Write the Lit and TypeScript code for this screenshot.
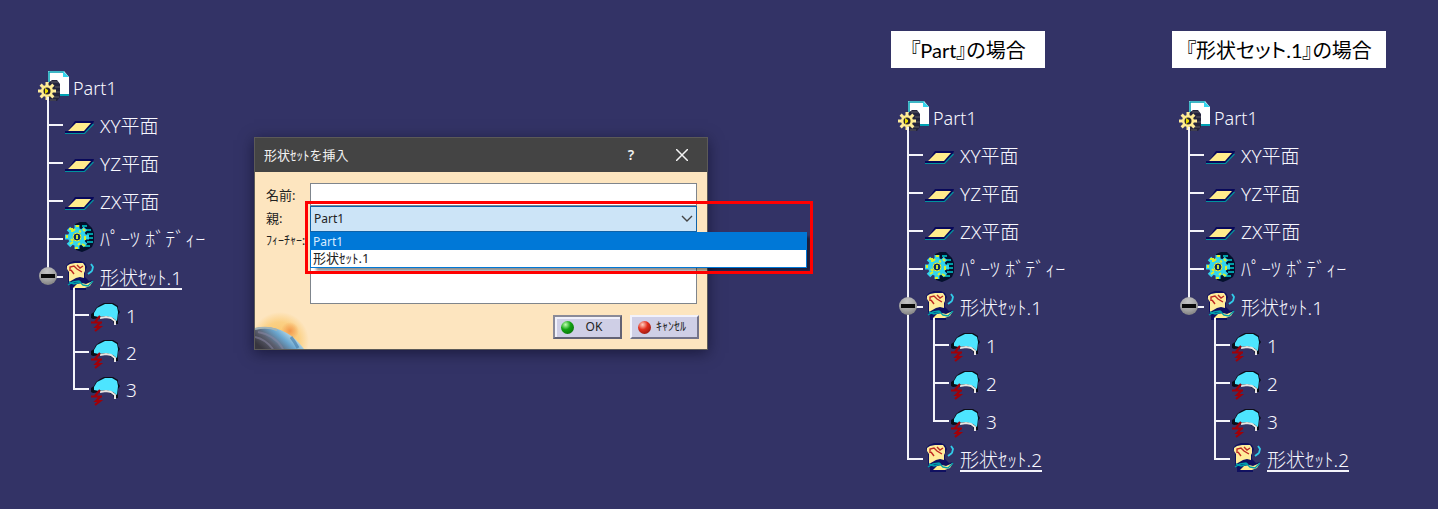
import { LitElement, html, css, svg, nothing } from "lit";
import { customElement, property, state } from "lit/decorators.js";
import { classMap } from "lit/directives/class-map.js";

type IconName = "part" | "plane" | "body" | "set" | "surface";

interface TreeItem {
  label: string;
  icon: IconName;
  current?: boolean;
  children?: TreeItem[];
}

const planes: TreeItem[] = [
  { label: "XY平面", icon: "plane" },
  { label: "YZ平面", icon: "plane" },
  { label: "ZX平面", icon: "plane" },
  { label: "ﾊﾟｰﾂ ﾎﾞﾃﾞｨｰ", icon: "body" },
];
const surfaces: TreeItem[] = ["1", "2", "3"].map((label) => ({ label, icon: "surface" }));
const set2: TreeItem = { label: "形状ｾｯﾄ.2", icon: "set", current: true };

const before: TreeItem = {
  label: "Part1",
  icon: "part",
  children: [...planes, { label: "形状ｾｯﾄ.1", icon: "set", current: true, children: surfaces }],
};
const underPart: TreeItem = {
  label: "Part1",
  icon: "part",
  children: [...planes, { label: "形状ｾｯﾄ.1", icon: "set", children: surfaces }, set2],
};
const underSet: TreeItem = {
  label: "Part1",
  icon: "part",
  children: [...planes, { label: "形状ｾｯﾄ.1", icon: "set", children: [...surfaces, set2] }],
};

const teeth = (cx: number, cy: number, r: number, w: number, fill: string) =>
  [0, 45, 90, 135].map(
    (a) => svg`<rect x=${cx - w / 2} y=${cy - r} width=${w} height=${r * 2} fill=${fill} transform="rotate(${a} ${cx} ${cy})"/>`
  );

const icons = {
  part: () => svg`
    <path d="M10 3H26L31 9V28H10Z" fill="#fff"/>
    <path d="M11 14V4H26" fill="none" stroke="#00a0b4" stroke-width="1.5"/>
    <path d="M25 3L31 9H25Z" fill="#33d6ee"/>
    <path d="M20 27H31" stroke="#00a0b4" stroke-width="2"/>
    <path d="M10 15L14 12H19L22 16V29L19 33H11Z" fill="#24243c"/>
    <path d="M13 14H20M17 19H22M17 24H22M14 29H21M12 32H18" stroke="#5d5a62"/>
    ${teeth(9, 23, 9, 3, "#ffec9a")}
    <circle cx="9" cy="23" r="6" fill="#ffec8c"/>
    <circle cx="9" cy="23" r="3.5" fill="#26222c"/>
    <path d="M7 20L10 22V24L7 26Z" fill="#e8dc00"/>`,
  plane: () => svg`
    <path d="M10 15H29L28 18L19 28H0V25H3Z" fill="#08085a"/>
    <path d="M11 17H26L19 25H3Z" fill="#ffec8c"/>
    <path d="M0 27.500H19.500L28.500 18" fill="none" stroke="#00929e" stroke-width="1.2"/>`,
  body: () => svg`
    <path d="M10 4L15 2H21L24 5L27 8L29 13V22L27 27L22 30L17 32L11 30Z" fill="#04102c"/>
    <path d="M17 6H22M21 10H26M22 14H28M23 18H28M22 22H28M20 26H25" stroke="#00a0a8" stroke-width="2"/>
    ${teeth(12, 17, 12, 5, "#32d5ee")}
    <circle cx="12" cy="17" r="9" fill="#32d5ee"/>
    <path d="M11 6H14M4 9H7V12M18 9L20 11M2 15V18M20 16V20M5 24L8 22M10 28H13M17 24L20 26M8 11L10 9M14 11L16 12M6 19L8 21M15 23L13 25" fill="none" stroke="#ddf02c" stroke-width="2"/>
    <circle cx="12" cy="17" r="4" fill="#072864" stroke="#f0ed28" stroke-width="1"/>
    <path d="M12 15V19" stroke="#cae635" stroke-width="2"/>`,
  set: () => svg`
    <path d="M1 8L4 5L9 3H16L20 5L22 9L20 14V19L24 23L28 22L25 28L21 30V32H5V28L3 24V13Z" fill="#101060"/>
    <path d="M2 8L5 6L10 5L18 5L20 8V13L19 15V20L15 19L11 20L4 24V14L2 11Z" fill="#ffec9a"/>
    <path d="M8 30L12 26L17 25L21 26L28 23L25 28L20 30Z" fill="#ffec8c"/>
    <path d="M5 13L5 9L9 8L12 11L17 14M12 7L15 10L18 8M6 12L9 16" fill="none" stroke="#be2824" stroke-width="1.400"/>
    <path d="M3 27L8 24L14 23L18 27L23 28L28 23M4 24L9 26L16 24" fill="none" stroke="#009eac" stroke-width="1.400"/>
    <path d="M23 16L27 13M27 13L28 9L26 6" fill="none" stroke="#31cce9" stroke-width="1.800"/>`,
  surface: () => svg`
    <path d="M0 18L3 16L5 12L9 9L13 7H22L27 10V13L29 16L27 19V28H23L22 25L17 22H10L2 23L0 22Z" fill="#0a0e18"/>
    <path d="M3 20V17L6 12L10 10L14 8L21 8L26 11L27 16L26 25L22 22L15 20L8 21Z" fill="#4de5ff"/>
    <path d="M9 22L15 21L20 22L24 25V29" fill="none" stroke="#e9e5e2" stroke-width="2"/>
    <path d="M9 20L4 26M0 26.500H11M9 27L5 31H9L4 35" fill="none" stroke="#a00008" stroke-width="2.200"/>`,
};

@customElement("feature-tree")
export class FeatureTree extends LitElement {
  @property({ attribute: false }) root!: TreeItem;
  @property({ type: Boolean, reflect: true }) compact = false;
  @state() private open = true;

  static styles = css`
    :host {
      display: block;
      --row: 38px;
      color: #f8f8ff;
      font: 300 19px/22px "Noto Sans", "Noto Sans CJK JP", sans-serif;
    }
    :host([compact]) {
      --child-row: 37px;
    }
    ul {
      list-style: none;
      margin: 0;
      padding: 0;
    }
    .branches {
      padding-left: 9px;
    }
    .branches .branches {
      --row: var(--child-row, 38px);
      padding-left: 8px;
    }
    .node {
      display: grid;
      grid-template-columns: 18px 1fr;
      position: relative;
    }
    .rail {
      background:
        linear-gradient(#f4f4fa, #f4f4fa) 0 0 / 2px 100% no-repeat,
        linear-gradient(#f4f4fa, #f4f4fa) 0 18px / 16px 2px no-repeat;
    }
    .last > .rail {
      background-size: 2px 20px, 16px 2px;
    }
    .row {
      display: flex;
      align-items: center;
      height: var(--row);
      gap: 5px;
      white-space: nowrap;
    }
    .icon {
      width: 30px;
      height: 38px;
      flex: none;
      overflow: visible;
    }
    .label {
      margin-top: 4px;
      border-bottom: 2px solid transparent;
      line-height: 20px;
    }
    .title {
      font-size: 18px;
    }
    .kana {
      font-size: 20px;
    }
    .current {
      border-color: #f4f4fb;
    }
    .toggle {
      position: absolute;
      left: -8px;
      top: 9px;
      width: 18px;
      height: 18px;
      padding: 0;
      border: 0;
      border-radius: 50%;
      background: radial-gradient(circle at 45% 25%, #c4c4c4, #a0a0a0 55%, #6c6c6c);
    }
    .dash {
      display: block;
      height: 4px;
      margin: 0 2px;
      background: #0a0a0a;
    }
  `;

  private row(item: TreeItem) {
    const trunk = item.children && this.open;
    return html`<div class="row">
      <svg class="icon" viewBox="0 0 30 38" aria-hidden="true">
        ${icons[item.icon]()}
        ${trunk
          ? item.icon === "part"
            ? svg`<rect x="9" y="29" width="2" height="9" fill="#f4f4fa"/>`
            : svg`<rect x="8" y="30" width="2" height="8" fill="#f4f4fa"/>`
          : nothing}
      </svg>
      <span class=${classMap({
        label: true,
        title: item.icon === "part",
        kana: item.icon === "body",
        current: !!item.current,
      })}>${item.label}</span>
    </div>`;
  }

  private branches(items: TreeItem[]): unknown {
    return html`<ul class="branches">
      ${items.map(
        (item, i) => html`<li class=${classMap({ node: true, last: i === items.length - 1 })}>
          <span class="rail"></span>
          <div>
            ${this.row(item)}
            ${item.children && this.open ? this.branches(item.children) : nothing}
          </div>
          ${item.children
            ? html`<button class="toggle" aria-label=${item.label} aria-expanded=${this.open}
                @click=${() => (this.open = !this.open)}><span class="dash"></span></button>`
            : nothing}
        </li>`
      )}
    </ul>`;
  }

  render() {
    return html`${this.row(this.root)}${this.branches(this.root.children ?? [])}`;
  }
}

@customElement("insert-dialog")
export class InsertDialog extends LitElement {
  @state() private parent = 0;
  private options = ["Part1", "形状ｾｯﾄ.1"];

  static styles = css`
    :host {
      display: block;
      width: 454px;
      font: 13px/18px "Noto Sans", "Noto Sans CJK JP", sans-serif;
      color: #222;
    }
    * {
      box-sizing: border-box;
    }
    .dialog {
      border: 1px solid #5c5a58;
      box-shadow: 0 3px 14px rgba(0, 0, 20, 0.5);
      background: #fde5bf;
    }
    .bar {
      display: flex;
      align-items: center;
      height: 34px;
      padding: 0 9px;
      background: #444;
      color: #f2f2f2;
    }
    .name {
      flex: 1;
      font: inherit;
      margin: 0;
    }
    .tool {
      width: 32px;
      height: 30px;
      padding: 0;
      border: 0;
      background: none;
      color: inherit;
      font: 600 14px/20px "Noto Sans", sans-serif;
    }
    .tools {
      display: flex;
      gap: 19px;
    }
    .glyph {
      display: block;
      margin: auto;
    }
    .form {
      display: grid;
      grid-template-columns: 44px 1fr;
      padding: 11px 10px 0 11px;
    }
    .caption {
      padding-top: 3px;
      white-space: nowrap;
    }
    .small {
      font-size: 12px;
      padding-top: 0;
    }
    .text,
    .area {
      display: block;
      width: 100%;
      border: 1px solid #7f858c;
      border-radius: 0;
      background: #fff;
      resize: none;
      outline: 0;
    }
    .text {
      height: 23px;
    }
    .area {
      height: 72px;
    }
    .combo {
      position: relative;
    }
    .select {
      display: block;
      width: 100%;
      height: 26px;
      padding: 0 3px;
      appearance: none;
      border: 1px solid #0f62a8;
      border-radius: 0;
      background: #cce4f7;
      color: #222;
      font: 12px/20px "Noto Sans", "Noto Sans CJK JP", sans-serif;
    }
    .arrow {
      position: absolute;
      right: 4px;
      top: 9px;
    }
    .list {
      position: absolute;
      z-index: 1;
      top: 100%;
      left: 0;
      width: 497px;
      margin: 0;
      padding: 0;
      list-style: none;
      border: 1px solid #0078d7;
      background: #fff;
      box-shadow: 5px 4px 3px -1px rgba(0, 0, 0, 0.45);
    }
    .option {
      height: 17px;
      padding: 0 2px;
      line-height: 17px;
    }
    .chosen {
      background: #0078d7;
      color: #d8ecff;
      font-size: 12px;
    }
    .marker {
      position: absolute;
      z-index: 2;
      top: -5px;
      left: -5px;
      width: 508px;
      height: 73px;
      border: 3px solid #f00;
      pointer-events: none;
    }
    .foot {
      display: flex;
      justify-content: space-between;
      align-items: flex-end;
      height: 45px;
      padding-right: 8px;
    }
    .planet {
      display: block;
      width: 54px;
      height: 38px;
    }
    .actions {
      display: flex;
      gap: 8px;
      padding-bottom: 10px;
    }
    .button {
      display: flex;
      align-items: center;
      width: 69px;
      height: 24px;
      padding: 0 6px;
      border: 2px solid;
      border-color: #f2f2fb #74748a #74748a #f2f2fb;
      border-radius: 0;
      background: #cfcfe6;
      color: #222;
      font: 12px/18px "Noto Sans", "Noto Sans CJK JP", sans-serif;
    }
    .main {
      border-color: #8a8a98 #626274 #626274 #8a8a98;
      box-shadow: inset 2px 2px #f0f0fa;
    }
    .ball {
      width: 13px;
      height: 13px;
      border-radius: 50%;
      flex: none;
      background: radial-gradient(circle at 35% 28%, #bfffb0, #12a312 40%, #056005);
    }
    .red {
      background: radial-gradient(circle at 35% 28%, #ffd0c0, #e22e1c 40%, #75100c);
    }
    .word {
      flex: 1;
      text-align: center;
    }
  `;

  render() {
    return html`<section class="dialog" role="dialog" aria-labelledby="title">
      <header class="bar">
        <h2 class="name" id="title">形状ｾｯﾄを挿入</h2>
        <div class="tools">
          <button class="tool">?</button>
          <button class="tool" aria-label="閉じる">
            <svg class="glyph" width="12" height="12" viewBox="0 0 12 12">
              <path d="M0 0L12 12M12 0L0 12" stroke="#f4f4f4" stroke-width="1.5"/>
            </svg>
          </button>
        </div>
      </header>
      <div class="form">
        <label class="caption" for="name">名前:</label>
        <input class="text" id="name" />
        <label class="caption" for="parent">親:</label>
        <div class="combo">
          <select class="select" id="parent"
            @change=${(e: Event) => (this.parent = (e.target as HTMLSelectElement).selectedIndex)}>
            ${this.options.map((o, i) => html`<option ?selected=${i === this.parent}>${o}</option>`)}
          </select>
          <svg class="arrow" width="12" height="8" viewBox="0 0 12 8" aria-hidden="true">
            <path d="M1 1L6 6L11 1" fill="none" stroke="#444" stroke-width="1.4"/>
          </svg>
          <ul class="list" role="listbox" aria-label="親">
            ${this.options.map(
              (o, i) => html`<li class=${classMap({ option: true, chosen: i === this.parent })}
                role="option" aria-selected=${i === this.parent} @click=${() => (this.parent = i)}>${o}</li>`
            )}
          </ul>
          <div class="marker"></div>
        </div>
        <label class="caption small" for="features">ﾌｨｰﾁｬｰ:</label>
        <textarea class="area" id="features"></textarea>
      </div>
      <footer class="foot">
        <svg class="planet" viewBox="0 0 54 38" aria-hidden="true">
          <defs>
            <radialGradient id="glow" gradientUnits="userSpaceOnUse" cx="25" cy="30" r="29">
              <stop offset="0" stop-color="#fac264"/>
              <stop offset=".65" stop-color="#fbd084"/>
              <stop offset="1" stop-color="#fde5bf"/>
            </radialGradient>
            <radialGradient id="sun" gradientUnits="userSpaceOnUse" cx="35" cy="20" r="9">
              <stop offset="0" stop-color="#f2974c"/>
              <stop offset="1" stop-color="#f49a4c" stop-opacity="0"/>
            </radialGradient>
            <linearGradient id="globe" gradientUnits="userSpaceOnUse" x1="10" y1="40" x2="30" y2="17">
              <stop offset="0" stop-color="#38363f"/>
              <stop offset=".35" stop-color="#5c6070"/>
              <stop offset=".7" stop-color="#6aa6cf"/>
              <stop offset="1" stop-color="#b9dcea"/>
            </linearGradient>
          </defs>
          <rect width="54" height="38" fill="url(#glow)"/>
          <circle cx="35" cy="20" r="9" fill="url(#sun)"/>
          <path d="M0 17Q30 12 49 38H0Z" fill="url(#globe)"/>
          <path d="M0 18Q12 15 22 19" fill="none" stroke="#a3b4b8" stroke-width="2"/>
          <path d="M0 26Q10 28 18 38M3 21Q20 24 28 38" fill="none" stroke="#8d8aa8" stroke-width="2" opacity=".5"/>
          <path d="M36 26Q40 31 43 37" fill="none" stroke="#3f78a8" stroke-width="3" opacity=".6"/>
        </svg>
        <div class="actions">
          <button class="button main"><span class="ball"></span><span class="word">OK</span></button>
          <button class="button"><span class="ball red"></span><span class="word">ｷｬﾝｾﾙ</span></button>
        </div>
      </footer>
    </section>`;
  }
}

@customElement("app-root")
export class AppRoot extends LitElement {
  static styles = css`
    :host {
      display: block;
    }
    .page {
      box-sizing: border-box;
      display: grid;
      grid-template-columns: 216fr 637fr 281fr 266fr;
      align-items: start;
      min-height: 100vh;
      padding-left: 38px;
      background: #333366;
    }
    .start {
      padding-top: 68px;
    }
    .middle {
      padding-top: 137px;
    }
    .case {
      padding-top: 31px;
    }
    .heading {
      box-sizing: border-box;
      width: fit-content;
      min-width: 154px;
      height: 37px;
      margin: 0 0 30px;
      padding: 4px 14px 0;
      background: #fff;
      color: #000;
      font: 20px/30px Lato, "Noto Sans CJK JP", sans-serif;
      font-feature-settings: "palt";
      text-align: center;
      white-space: nowrap;
    }
    .tree {
      padding-left: 7px;
    }
  `;

  render() {
    return html`<main class="page">
      <div class="start"><feature-tree compact .root=${before}></feature-tree></div>
      <div class="middle"><insert-dialog></insert-dialog></div>
      <section class="case">
        <h2 class="heading">『Part』の場合</h2>
        <feature-tree class="tree" .root=${underPart}></feature-tree>
      </section>
      <section class="case">
        <h2 class="heading">『形状セット.1』の場合</h2>
        <feature-tree class="tree" .root=${underSet}></feature-tree>
      </section>
    </main>`;
  }
}
